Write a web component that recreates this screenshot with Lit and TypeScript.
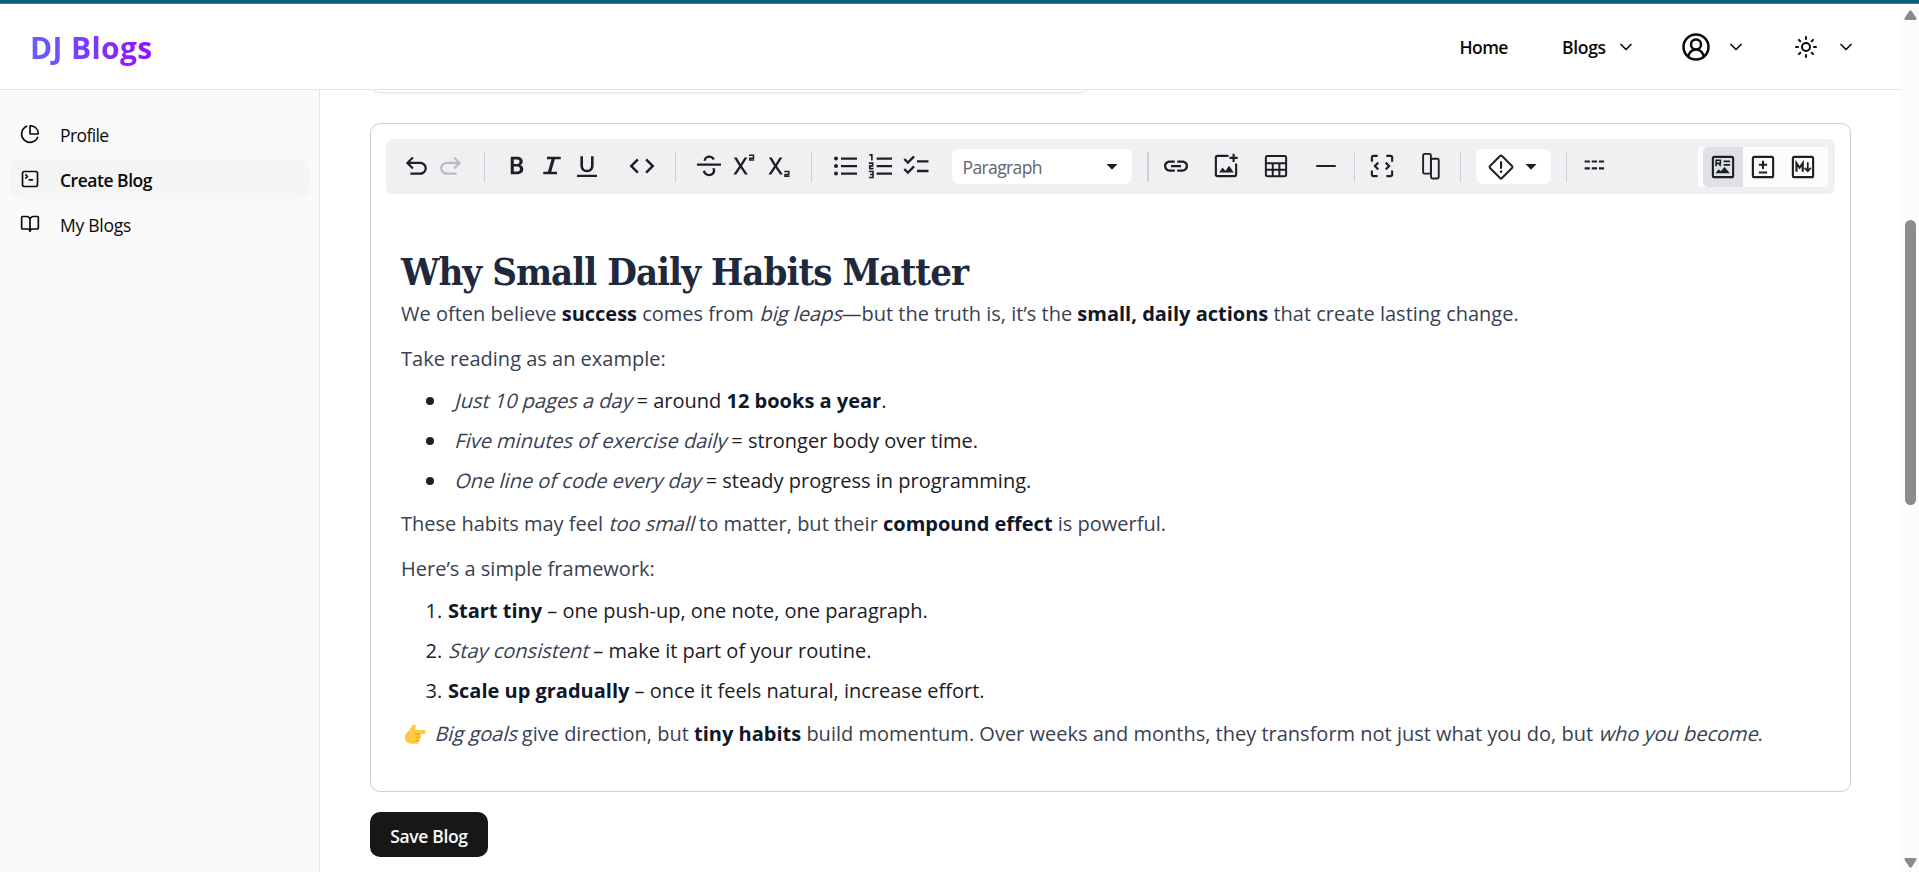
import { LitElement, html, css, svg, TemplateResult } from "lit";
import { customElement } from "lit/decorators.js";

type Item =
  | { icon: string; gap?: number; muted?: boolean }
  | { sep: true; gap: number; wide?: boolean }
  | { select: string; gap: number }
  | { admonition: true; gap: number };

const glyphs: Record<string, unknown> = {
  undo: svg`<path d="M7.5 19v-1.800h7.600c1 0 1.900-.33 2.650-.98.75-.65 1.130-1.470 1.130-2.420s-.38-1.770-1.130-2.420c-.75-.65-1.650-.98-2.650-.98H7.250l2.900 2.900L8.900 14.600 3.900 9.500l5-5 1.250 1.300-2.900 2.800h7.850c1.500 0 2.800.5 3.900 1.480 1.080.98 1.630 2.220 1.630 3.720s-.55 2.740-1.630 3.720c-1.100.98-2.400 1.480-3.900 1.480z"/>`,
  bold: svg`<path fill-rule="evenodd" d="M7 4.500h5.300c1.200 0 2.200.33 3 1 .85.700 1.250 1.600 1.250 2.750 0 .75-.18 1.350-.5 1.850-.35.5-.78.88-1.250 1.120v.1c.6.2 1.120.6 1.550 1.150.43.560.65 1.240.65 2.030 0 1.250-.45 2.250-1.320 2.950-.88.700-1.930 1.050-3.180 1.050H7zm2.400 2.200v3.600h2.800c.56 0 1-.18 1.350-.53.34-.350.5-.77.5-1.270 0-.52-.16-.94-.5-1.280-.35-.34-.8-.52-1.350-.52zm0 5.700v3.900h3c.6 0 1.080-.2 1.440-.57.36-.38.55-.83.55-1.380s-.19-1-.55-1.380c-.36-.38-.84-.57-1.440-.57z"/>`,
  italic: svg`<path d="M5 18.500v-2h3.700l2.900-10H8v-2h11v2h-4.700l-2.900 10H16v2z"/>`,
  underline: svg`<path d="M4 20.800v-1.900h16v1.900zM12 17c-1.700 0-3-.52-3.950-1.550C7.100 14.400 6.700 13.100 6.700 11.400V4.200h2.100v7.300c0 1.100.27 1.970.8 2.600.55.640 1.350.95 2.400.95s1.850-.31 2.400-.95c.53-.63.8-1.500.8-2.600V4.200h2.100v7.200c0 1.700-.4 3-1.350 4.050C15 16.480 13.700 17 12 17z"/>`,
  code: svg`<path d="M8 18l-6-6 6-6 1.400 1.400L4.800 12l4.600 4.600zM16 18l-1.400-1.400 4.600-4.600-4.600-4.600L16 6l6 6z"/>`,
  strike: svg`<path d="M2.400 10h19.200v1.800H2.400z"/><path d="M7.600 7.800C8 5.400 9.700 3.500 12.100 3.500c2.100 0 3.800 1 4.600 2.800l-1.800.8c-.5-1.100-1.500-1.800-2.800-1.800-1.500 0-2.400.9-2.600 2.500zM6.900 16.200l1.800-.8c.6 1.800 1.700 2.900 3.400 2.900 1.800 0 3-1.200 3-2.700 0-.8-.2-1.300-.6-1.900h2.100c.3.600.4 1.200.4 1.900 0 2.600-2.100 4.500-4.900 4.500-2.500 0-4.500-1.400-5.200-3.900z"/>`,
  sup: svg`<path d="M3.500 18.800l4.600-6.800L3.900 5.200h2.300l3.100 5.100 3.100-5.100h2.300L10.400 12l4.700 6.800h-2.300l-3.500-5.300-3.500 5.300zM16 7.700V5.100h3V4h-3V2.800h4.200v3.500h-3v.2h3v1.200z"/>`,
  sub: svg`<path d="M3.500 18.800l4.600-6.800L3.900 5.200h2.300l3.100 5.100 3.100-5.100h2.300L10.400 12l4.700 6.800h-2.300l-3.500-5.300-3.500 5.300zM16.200 20.700v-2.600h3V17h-3v-1.200h4.200v3.500h-3v.2h3v1.200z"/>`,
  bullets: svg`<circle cx="4" cy="6" r="1.600"/><circle cx="4" cy="12" r="1.600"/><circle cx="4" cy="18" r="1.600"/><path d="M8 5.100h12.800v1.800H8zM8 11.100h12.800v1.800H8zM8 17.100h12.800v1.800H8z"/>`,
  numbers: svg`<path d="M8.500 5.100h12.300v1.800H8.500zM8.500 11.100h12.300v1.800H8.500zM8.500 17.100h12.300v1.800H8.500z"/><path d="M2.700 3.100h2v4.500M2.300 9.700h3v2.200H3v2.200h3M2.300 16.400h3.300v4.800H2.300M3.200 18.800h2.400" fill="none" stroke="currentColor" stroke-width="1.300"/>`,
  checks: svg`<path d="M5.500 10.500L2 7l1.300-1.300 2.200 2.200 4.300-4.300 1.300 1.300zM5.500 18.500L2 15l1.300-1.300 2.200 2.200 4.300-4.300 1.300 1.300zM12.800 7.300H22v1.900h-9.200zM12.800 15H22v1.900h-9.200z"/>`,
  link: svg`<path d="M11 16.500H7c-1.300 0-2.400-.44-3.300-1.300A4.400 4.400 0 012.400 12c0-1.300.44-2.300 1.300-3.200C4.600 7.900 5.700 7.500 7 7.500h4v1.800H7c-.8 0-1.400.27-2 .8-.5.5-.8 1.100-.8 1.900s.3 1.400.8 1.900c.6.500 1.200.8 2 .8h4zM8 11.100h8v1.800H8zM13 16.500v-1.800h4c.8 0 1.400-.3 2-.8.5-.5.8-1.100.8-1.900s-.3-1.400-.8-1.900c-.6-.53-1.200-.8-2-.8h-4V7.500h4c1.300 0 2.400.4 3.300 1.300.86.900 1.300 1.900 1.300 3.200s-.44 2.300-1.300 3.200c-.9.860-2 1.300-3.300 1.300z"/>`,
  image: svg`<path d="M14 3.900H5.200c-.8 0-1.300.5-1.300 1.300v13.600c0 .8.500 1.300 1.300 1.300h13.600c.8 0 1.300-.5 1.300-1.300V10" fill="none" stroke="currentColor" stroke-width="1.700"/><path d="M6.500 17.200l2.800-4 2.200 2.700 3-4.200 3.700 5.500zM17.200 2.200h1.700v2.400h2.400v1.700h-2.400v2.400h-1.700V6.300h-2.400V4.600h2.400z"/>`,
  table: svg`<path d="M5.200 4h13.600c.8 0 1.300.5 1.300 1.300v13.500c0 .8-.5 1.300-1.300 1.300H5.200c-.8 0-1.300-.5-1.300-1.300V5.300C3.900 4.500 4.400 4 5.200 4zM4 9.700h16M4 14.900h16M9.400 9.700V20M14.700 9.700V20" fill="none" stroke="currentColor" stroke-width="1.600"/>`,
  rule: svg`<path d="M4.200 11.200h15.600v1.600H4.200z"/>`,
  frame: svg`<path d="M3.900 8.500V5.200c0-.8.5-1.300 1.300-1.300h3.300M15.500 3.900h3.300c.8 0 1.300.5 1.300 1.300v3.300M20.100 15.500v3.300c0 .8-.5 1.300-1.300 1.300h-3.300M8.500 20.100H5.200c-.8 0-1.300-.5-1.300-1.300v-3.300M9 9.300L6.300 12 9 14.700M15 9.300l2.700 2.700-2.700 2.700" fill="none" stroke="currentColor" stroke-width="1.700"/>`,
  columns: svg`<rect x="5.700" y="2.300" width="6.200" height="15.800" rx="1.200" fill="none" stroke="currentColor" stroke-width="1.500"/><rect x="12" y="6.200" width="6.200" height="15.800" rx="1.200" fill="none" stroke="currentColor" stroke-width="1.500"/>`,
  alert: svg`<path d="M11.200 3.200c.5-.5 1.100-.5 1.600 0l8 8c.5.5.5 1.100 0 1.600l-8 8c-.5.5-1.100.5-1.600 0l-8-8c-.5-.5-.5-1.100 0-1.600z" fill="none" stroke="currentColor" stroke-width="1.600"/><path d="M11.200 7.300h1.700v6h-1.700zM11.200 14.800h1.700v1.800h-1.700z"/>`,
  dashes: svg`<path d="M4.200 9h15.600M4.200 14.500h15.600" transform="translate(.3 -.6)" fill="none" stroke="currentColor" stroke-width="1.700" stroke-dasharray="4.200 1.500"/>`,
  rich: svg`<rect x="3.900" y="3.900" width="16.200" height="16.200" rx="1.200" fill="none" stroke="currentColor" stroke-width="1.700"/><path d="M6.500 11.300V6.600h3.400v2.500H6.700M8.500 9.100l1.700 2.200M12.500 7.500h5.200M12.500 10.300h5.200" fill="none" stroke="currentColor" stroke-width="1.300"/><path d="M6 17l2.500-3.200 1.700 1.600 3-3.400 4.300 5z"/>`,
  diff: svg`<rect x="3.900" y="3.900" width="16.200" height="16.200" rx="1.200" fill="none" stroke="currentColor" stroke-width="1.700"/><path d="M12 7v6.500M8.700 10.200h6.600M8.700 16.300h6.600" fill="none" stroke="currentColor" stroke-width="1.600"/>`,
  source: svg`<rect x="3.900" y="3.900" width="16.200" height="16.200" rx="1.200" fill="none" stroke="currentColor" stroke-width="1.700"/><path d="M6.800 15.800V9l2.500 3.600L11.800 9v6.800" fill="none" stroke="currentColor" stroke-width="1.700"/><path d="M15.800 8.200v6.800M13.300 12.700l2.500 2.600 2.500-2.600" fill="none" stroke="currentColor" stroke-width="1.400"/>`,
};

const icon = (name: string, size = 30): TemplateResult =>
  html`<svg width=${size} height=${size} viewBox="0 0 24 24" fill="currentColor">${glyphs[name]}</svg>`;

const lucide = (size: number, body: unknown, weight = 2): TemplateResult =>
  html`<svg width=${size} height=${size} viewBox="0 0 24 24" fill="none" stroke="currentColor"
    stroke-width=${weight} stroke-linecap="round" stroke-linejoin="round">${body}</svg>`;

const chevron = () => lucide(20, svg`<path d="m6 9 6 6 6-6"/>`);
const caret = () => html`<svg width="12" height="6" viewBox="0 0 12 6"><path d="M.5 0h11L6 5.800z" fill="#1c2024"/></svg>`;

const tools: Item[] = [
  { icon: "undo", gap: 12.5 }, { icon: "redo", muted: true },
  { sep: true, gap: 15.5 },
  { icon: "bold", gap: 14.5 }, { icon: "italic" }, { icon: "underline" },
  { icon: "code", gap: 20 },
  { sep: true, gap: 15.5 },
  { icon: "strike", gap: 15.5 }, { icon: "sup" }, { icon: "sub" },
  { sep: true, gap: 14.5 },
  { icon: "bullets", gap: 16 }, { icon: "numbers" }, { icon: "checks" },
  { select: "Paragraph", gap: 19 },
  { sep: true, gap: 15, wide: true },
  { icon: "link", gap: 9.5 }, { icon: "image", gap: 15 }, { icon: "table", gap: 15 }, { icon: "rule", gap: 15 },
  { sep: true, gap: 10.5 },
  { icon: "frame", gap: 9.5 }, { icon: "columns", gap: 14 },
  { sep: true, gap: 11.5 },
  { admonition: true, gap: 15 },
  { sep: true, gap: 15 },
  { icon: "dashes", gap: 9.5 },
];

@customElement("editor-toolbar")
class EditorToolbar extends LitElement {
  static styles = css`
    :host { display: flex; align-items: center; height: 55px; border-radius: 7px; background: #f0f0f3; color: #1c2024; font-family: "Open Sans", sans-serif; }
    svg { display: block; flex: none; }
    .tool { display: flex; box-sizing: border-box; width: 35px; height: 35px; padding-bottom: 1px; align-items: center; justify-content: center; flex: none; }
    .muted { color: #b9bbc6; }
    .muted svg { transform: scaleX(-1); }
    .sep { width: 1px; height: 30px; background: #cdced6; flex: none; }
    .sep.wide { width: 2px; }
    .select { display: flex; box-sizing: border-box; width: 180px; height: 35px; padding: 0 14px 0 10.500px; align-items: center; justify-content: space-between; border-radius: 7px; background: #fff; flex: none; }
    .label { font-size: 17.500px; letter-spacing: -.62px; color: #60646c; }
    .admonition { display: flex; box-sizing: border-box; width: 75px; height: 35px; padding: 0 14px 0 10px; align-items: center; justify-content: space-between; border-radius: 7px; background: #fff; flex: none; }
    .views { display: flex; margin-left: auto; margin-right: 7px; padding-left: 5px; height: 40px; width: 125px; background: #fcfcfd; }
    .view { display: flex; width: 40px; align-items: center; justify-content: center; }
    .active { background: #e0e1e6; border-radius: 5px 0 0 5px; }
  `;

  private item(t: Item) {
    const margin = `margin-left:${t.gap ?? 0}px`;
    if ("icon" in t) {
      return html`<span class="tool ${t.muted ? "muted" : ""}" style=${margin}>${icon(t.icon === "redo" ? "undo" : t.icon)}</span>`;
    }
    if ("sep" in t) return html`<span class="sep ${t.wide ? "wide" : ""}" style=${margin}></span>`;
    if ("select" in t) return html`<span class="select" style=${margin}><span class="label">${t.select}</span>${caret()}</span>`;
    return html`<span class="admonition" style=${margin}>${icon("alert")}${caret()}</span>`;
  }

  render() {
    return html`
      ${tools.map((t) => this.item(t))}
      <div class="views">
        <span class="view active">${icon("rich")}</span>
        <span class="view">${icon("diff")}</span>
        <span class="view">${icon("source")}</span>
      </div>
    `;
  }
}

@customElement("app-root")
class AppRoot extends LitElement {
  static styles = css`
    :host { display: flex; flex-direction: column; height: 872px; overflow: hidden; background: #fff; color: #0a0a0a; font-family: "Open Sans", sans-serif; }
    svg { display: block; flex: none; }
    .strip { height: 3px; background: #0b5f78; border-bottom: 1px solid #3d7f93; flex: none; }
    .shell { display: flex; flex: 1; min-height: 0; }
    .page { display: flex; flex-direction: column; width: 1901px; }
    .header { display: flex; box-sizing: border-box; height: 86px; padding: 0 45px 0 30px; align-items: center; border-bottom: 1px solid #e5e5e5; flex: none; }
    .logo { padding-top: 3px; font-size: 30px; font-weight: 700; line-height: 42px; letter-spacing: .35px; background: linear-gradient(90deg, #615fff, #9810fa); background-clip: text; -webkit-background-clip: text; color: transparent; }
    .nav { display: flex; margin-left: auto; align-items: center; font-size: 17.500px; font-weight: 600; }
    .home { width: 102.500px; letter-spacing: -.6px; padding-top: 1px; }
    .blogs { width: 53.500px; letter-spacing: -.3px; padding-top: 1px; }
    .user { margin-left: 45px; }
    .sun { margin-left: 48px; }
    .down { margin-left: 15px; }
    .sun + .down { margin-left: 18.500px; }
    .body { display: flex; flex: 1; min-height: 0; }
    .side { display: flex; flex-direction: column; box-sizing: border-box; width: 320px; padding: 24px 10px; gap: 5px; background: #fafafa; border-right: 1px solid #e5e5e5; }
    .entry { display: flex; height: 40px; padding: 0 10px; gap: 20px; align-items: center; border-radius: 10px; font-size: 17.500px; letter-spacing: -.6px; }
    .entry span { padding-top: 2px; }
    .entry:last-child { letter-spacing: -.25px; }
    .entry.current { background: #f5f5f5; font-weight: 600; letter-spacing: -.48px; }
    .content { display: flex; flex-direction: column; width: 1481px; padding-left: 50px; align-items: flex-start; }
    .clip { display: flex; width: 724px; height: 6px; margin-left: -3px; padding-left: 3px; align-items: flex-end; overflow: hidden; flex: none; }
    .field { box-sizing: border-box; width: 720px; height: 45px; margin-bottom: 3px; border: 1px solid #e5e5e5; border-radius: 10px; box-shadow: 0 1px 2px rgba(0, 0, 0, .06); flex: none; }
    .editor { box-sizing: border-box; width: 1481px; height: 669px; margin-top: 27px; padding: 15px; border: 1px solid #cdced6; border-radius: 10px; flex: none; }
    .prose { padding: 57px 15px 0; font-size: 20px; color: #1c2024; white-space: nowrap; }
    h1 { margin: 0 0 -2px; font: 700 38px/42px "DejaVu Serif Condensed", "DejaVu Serif", serif; font-stretch: condensed; letter-spacing: -.97px; color: #1e293b; }
    p { margin: 0; line-height: 45px; color: #374151; }
    em { display: inline-block; font-style: normal; transform: skewX(-15deg); transform-origin: 0 68%; color: #374151; }
    strong { color: #0f172a; }
    ul, ol { margin: 0; padding: 0; list-style: none; line-height: 40px; }
    .bullet { display: flex; align-items: center; padding-left: 25px; gap: 20px; }
    .dot { width: 8px; height: 8px; border-radius: 50%; background: #1c2024; }
    .step { display: flex; padding-left: 24.500px; }
    .num { width: 22.500px; }
    .hand { display: inline-block; width: 22px; height: 21px; margin: 0 8px 0 3px; vertical-align: -4px; }
    .save { display: flex; box-sizing: border-box; width: 118px; height: 45px; margin-top: 20px; padding-top: 2px; align-items: center; justify-content: center; border-radius: 10px; background: #171717; color: #fafafa; font-size: 17.500px; font-weight: 600; letter-spacing: -.35px; }
    .scroll { display: flex; flex-direction: column; width: 18px; padding: 6px 0 4px; box-sizing: border-box; align-items: center; background: #fcfcfc; }
    .thumb { width: 11px; height: 285px; margin-top: 200px; border-radius: 6px; background: #8b8b8b; }
    .last { margin-top: auto; }
  `;

  private line(lead: string, rest: string) {
    return html`<li class="bullet"><span class="dot"></span><span><em>${lead}</em> = ${rest}</span></li>`;
  }

  render() {
    return html`
      <div class="strip"></div>
      <div class="shell">
        <div class="page">
          <header class="header">
            <span class="logo">DJ Blogs</span>
            <nav class="nav">
              <span class="home">Home</span>
              <span class="blogs">Blogs</span>${chevron()}
              <span class="user">${lucide(30, svg`<path d="M18 20a6 6 0 0 0-12 0"/><circle cx="12" cy="10" r="4"/><circle cx="12" cy="12" r="10"/>`)}</span>
              <span class="down">${chevron()}</span>
              <span class="sun">${lucide(24, svg`<circle cx="12" cy="12" r="4"/><path d="M12 2v2M12 20v2M4.900 4.900l1.400 1.400M17.700 17.700l1.400 1.400M2 12h2M20 12h2M6.300 17.700l-1.400 1.400M19.100 4.900l-1.400 1.400"/>`)}</span>
              <span class="down">${chevron()}</span>
            </nav>
          </header>
          <div class="body">
            <aside class="side">
              <div class="entry">${lucide(20, svg`<path d="M21 12c.55 0 1-.45.95-1a10 10 0 0 0-8.950-8.950c-.55-.06-1 .4-1 .95v8a1 1 0 0 0 1 1z"/><path d="M21.210 15.890A10 10 0 1 1 8 2.830"/>`)}<span>Profile</span></div>
              <div class="entry current">${lucide(20, svg`<path d="m7 11 2-2-2-2M11 13h4"/><rect x="3" y="3" width="18" height="18" rx="2"/>`)}<span>Create Blog</span></div>
              <div class="entry">${lucide(20, svg`<path d="M12 7v14M3 18a1 1 0 0 1-1-1V4a1 1 0 0 1 1-1h5a4 4 0 0 1 4 4 4 4 0 0 1 4-4h5a1 1 0 0 1 1 1v13a1 1 0 0 1-1 1h-6a3 3 0 0 0-3 3 3 3 0 0 0-3-3z"/>`)}<span>My Blogs</span></div>
            </aside>
            <main class="content">
              <div class="clip"><div class="field"></div></div>
              <section class="editor">
                <editor-toolbar></editor-toolbar>
                <article class="prose">
                  <h1>Why Small Daily Habits Matter</h1>
                  <p>We often believe <strong>success</strong> comes from <em>big leaps</em>—but the truth is, it’s the <strong>small, daily actions</strong> that create lasting change.</p>
                  <p>Take reading as an example:</p>
                  <ul>
                    <li class="bullet"><span class="dot"></span><span><em>Just 10 pages a day</em> = around <strong>12 books a year</strong>.</span></li>
                    ${this.line("Five minutes of exercise daily", "stronger body over time.")}
                    ${this.line("One line of code every day", "steady progress in programming.")}
                  </ul>
                  <p>These habits may feel <em>too small</em> to matter, but their <strong>compound effect</strong> is powerful.</p>
                  <p>Here’s a simple framework:</p>
                  <ol>
                    <li class="step"><span class="num">1.</span><span><strong>Start tiny</strong> – one push-up, one note, one paragraph.</span></li>
                    <li class="step"><span class="num">2.</span><span><em>Stay consistent</em> – make it part of your routine.</span></li>
                    <li class="step"><span class="num">3.</span><span><strong>Scale up gradually</strong> – once it feels natural, increase effort.</span></li>
                  </ol>
                  <p><svg class="hand" viewBox="0 0 22 21"><path d="M9 .8c1.500-.9 3.300.5 2.600 2.200L10.800 6h9c2.700 0 2.700 4 0 4h-3.600c1.300 1 1 3-.2 3.500.7 1.200.2 2.600-.9 3 .3 1.800-.8 3.200-2.600 3.200H7.500C3.500 19.700 1 17.500 1 13.500 1 9.500 3.500 8 6 5.500 7.200 4.300 7.700 1.600 9 .8z" fill="#ffc83d"/><path d="M11 10h5.200M11.500 13.500H16M11.500 16.600h3.600" stroke="#f09a38" stroke-width="1" fill="none"/></svg><em>Big goals</em> give direction, but <strong>tiny habits</strong> build momentum. Over weeks and months, they transform not just what you do, but <em>who you become</em>.</p>
                </article>
              </section>
              <div class="save">Save Blog</div>
            </main>
          </div>
        </div>
        <div class="scroll">
          <svg width="13" height="10" viewBox="0 0 13 10"><path d="M5.300 1Q6.500-.6 7.700 1l4.800 7.200Q13 10 11.300 10H1.700Q0 10 .5 8.200z" fill="#8b8b8b"/></svg>
          <div class="thumb"></div>
          <svg class="last" width="13" height="10" viewBox="0 0 13 10"><path d="M5.300 9Q6.500 10.600 7.700 9l4.800-7.200Q13 0 11.300 0H1.700Q0 0 .5 1.800z" fill="#8b8b8b"/></svg>
        </div>
      </div>
    `;
  }
}
